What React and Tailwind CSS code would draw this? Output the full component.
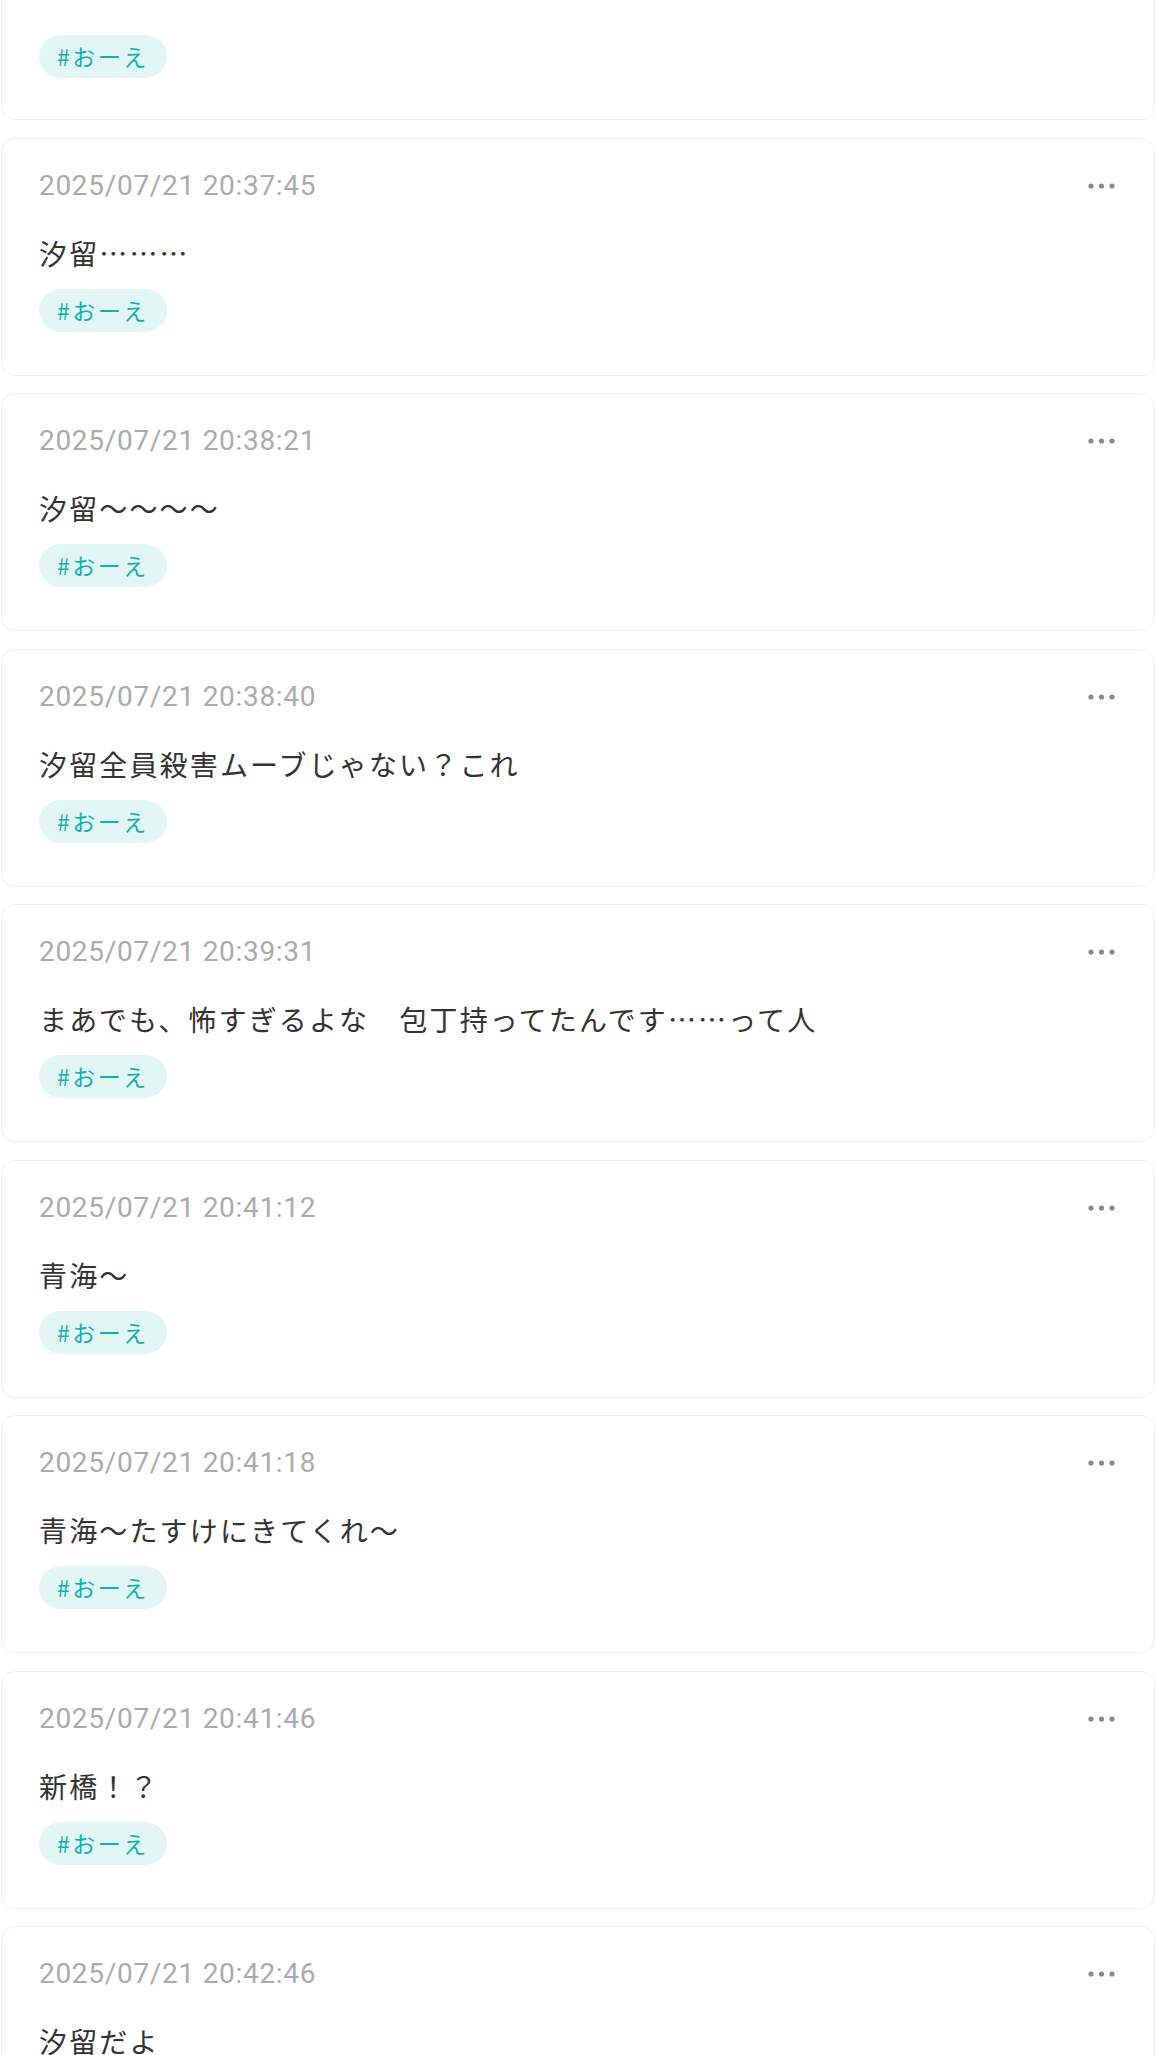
import React from "react";

const posts = [
  { time: "2025/07/21 20:37:45", text: "汐留………" },
  { time: "2025/07/21 20:38:21", text: "汐留～～～～" },
  { time: "2025/07/21 20:38:40", text: "汐留全員殺害ムーブじゃない？これ" },
  { time: "2025/07/21 20:39:31", text: "まあでも、怖すぎるよな　包丁持ってたんです……って人" },
  { time: "2025/07/21 20:41:12", text: "青海～" },
  { time: "2025/07/21 20:41:18", text: "青海～たすけにきてくれ～" },
  { time: "2025/07/21 20:41:46", text: "新橋！？" },
  { time: "2025/07/21 20:42:46", text: "汐留だよ" },
];

function MoreDots() {
  return (
    <svg width="27" height="6" viewBox="0 0 27 6" className="shrink-0">
      <circle cx="3" cy="3" r="2.6" fill="#8a8a8a" />
      <circle cx="13.5" cy="3" r="2.6" fill="#8a8a8a" />
      <circle cx="24" cy="3" r="2.6" fill="#8a8a8a" />
    </svg>
  );
}

function Tag() {
  return (
    <div className="flex">
      <span className="flex h-[43px] items-center rounded-full bg-[#e3f6f6] pl-[18px] pr-[18px] font-['Noto_Sans_CJK_JP',sans-serif] text-[23px] tracking-[2.5px] text-[#12b0b0]">
        #おーえ
      </span>
    </div>
  );
}

function PostCard({ time, text }) {
  return (
    <div className="rounded-[14px] border border-[#efefef] bg-white pl-[37px] pr-[39px] pt-[27px] pb-[43px]">
      <div className="flex h-[40px] items-center justify-between">
        <span className="font-['Roboto',sans-serif] text-[28px] leading-[40px] tracking-[0.7px] text-[#ababab]">
          {time}
        </span>
        <MoreDots />
      </div>
      <p className="mt-[27px] mb-[16px] font-['Noto_Sans_CJK_JP',sans-serif] text-[28px] leading-[40px] tracking-[2.15px] text-[#333333]">
        {text}
      </p>
      <Tag />
    </div>
  );
}

export default function App() {
  return (
    <div className="min-h-screen overflow-hidden bg-white">
      <div className="-mt-[20px] flex flex-col gap-[17.5px] px-px">
        {/* previous post, scrolled mostly out of view */}
        <div className="rounded-[14px] border border-[#efefef] bg-white pl-[37px] pr-[39px] pt-[54px] pb-[41px]">
          <Tag />
        </div>
        {posts.map((p) => (
          <PostCard key={p.time} time={p.time} text={p.text} />
        ))}
      </div>
    </div>
  );
}
